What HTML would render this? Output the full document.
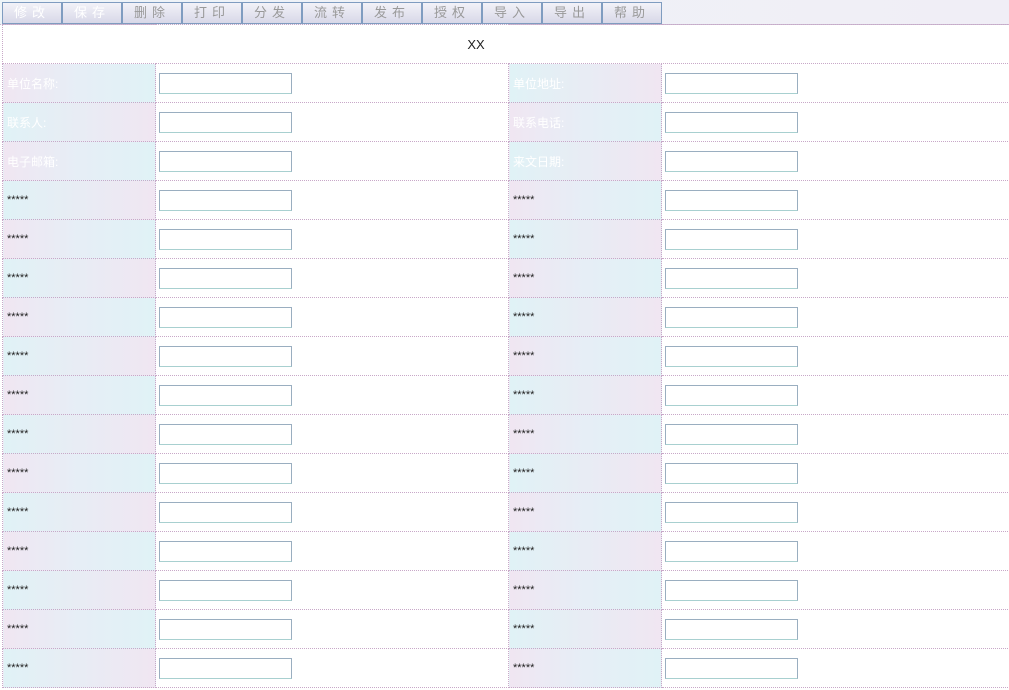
<!DOCTYPE html>
<html><head><meta charset="utf-8"><style>
body{margin:0;width:1009px;height:690px;background:#fff;font-family:"Liberation Sans","Noto Sans CJK SC",sans-serif;font-size:12px;overflow:hidden;position:relative}
.bar{position:absolute;left:0;top:0;width:1009px;height:24px;background:linear-gradient(90deg,#eef4f8,#f0eef6);border-bottom:1px dotted #c8b8d0}
.btn{position:absolute;top:2px;height:22px;border:1px solid #7f9cc0;background:linear-gradient(#f2f2f8,#d8d8e8);color:#999;font-size:13px;text-align:center;line-height:20px;letter-spacing:5px;box-sizing:border-box;width:60px}
table{position:absolute;left:2px;top:24px;border-collapse:collapse;width:1010px}
td{border:1px dotted #c8a8c8;height:39px;padding:0 0 0 4px;box-sizing:border-box}
td.t{height:39px;text-align:center;font-size:13px;color:#222;padding:0 62px 0 0}
td.l{width:153px;color:#222;font-size:11px}
td.a{background:linear-gradient(90deg,#f0e6f2,#e6eef6 50%,#e0f2f6)}
td.b{background:linear-gradient(90deg,#e0f2f6,#e8ecf4 50%,#f0e6f2)}
td.w{color:#fff;font-size:12px}
td.i{width:353px;padding-left:3px}
td.j{padding-left:3px}
input{width:133px;height:21px;border:1px solid #9aaec0;border-bottom-color:#a8d0d0;box-sizing:border-box;margin:0;display:block}
</style></head><body>
<div class="bar">
<div class="btn" style="left:2px;color:#fff">修改</div>
<div class="btn" style="left:62px;color:#fff">保存</div>
<div class="btn" style="left:122px">删除</div>
<div class="btn" style="left:182px">打印</div>
<div class="btn" style="left:242px">分发</div>
<div class="btn" style="left:302px">流转</div>
<div class="btn" style="left:362px">发布</div>
<div class="btn" style="left:422px">授权</div>
<div class="btn" style="left:482px">导入</div>
<div class="btn" style="left:542px">导出</div>
<div class="btn" style="left:602px">帮助</div>
</div>
<table>
<tr><td class="t" colspan="4">XX</td></tr>
<tr><td class="l a w">单位名称:</td><td class="i"><input></td><td class="l b w" style="width:151px">单位地址:</td><td class="j"><input></td></tr>
<tr><td class="l b w">联系人:</td><td class="i"><input></td><td class="l a w">联系电话:</td><td class="j"><input></td></tr>
<tr><td class="l a w">电子邮箱:</td><td class="i"><input></td><td class="l b w">来文日期:</td><td class="j"><input></td></tr>
<tr><td class="l b">*****</td><td class="i"><input></td><td class="l a">*****</td><td class="j"><input></td></tr>
<tr><td class="l a">*****</td><td class="i"><input></td><td class="l b">*****</td><td class="j"><input></td></tr>
<tr><td class="l b">*****</td><td class="i"><input></td><td class="l a">*****</td><td class="j"><input></td></tr>
<tr><td class="l a">*****</td><td class="i"><input></td><td class="l b">*****</td><td class="j"><input></td></tr>
<tr><td class="l b">*****</td><td class="i"><input></td><td class="l a">*****</td><td class="j"><input></td></tr>
<tr><td class="l a">*****</td><td class="i"><input></td><td class="l b">*****</td><td class="j"><input></td></tr>
<tr><td class="l b">*****</td><td class="i"><input></td><td class="l a">*****</td><td class="j"><input></td></tr>
<tr><td class="l a">*****</td><td class="i"><input></td><td class="l b">*****</td><td class="j"><input></td></tr>
<tr><td class="l b">*****</td><td class="i"><input></td><td class="l a">*****</td><td class="j"><input></td></tr>
<tr><td class="l a">*****</td><td class="i"><input></td><td class="l b">*****</td><td class="j"><input></td></tr>
<tr><td class="l b">*****</td><td class="i"><input></td><td class="l a">*****</td><td class="j"><input></td></tr>
<tr><td class="l a">*****</td><td class="i"><input></td><td class="l b">*****</td><td class="j"><input></td></tr>
<tr><td class="l b">*****</td><td class="i"><input></td><td class="l a">*****</td><td class="j"><input></td></tr>
</table>
</body></html>
